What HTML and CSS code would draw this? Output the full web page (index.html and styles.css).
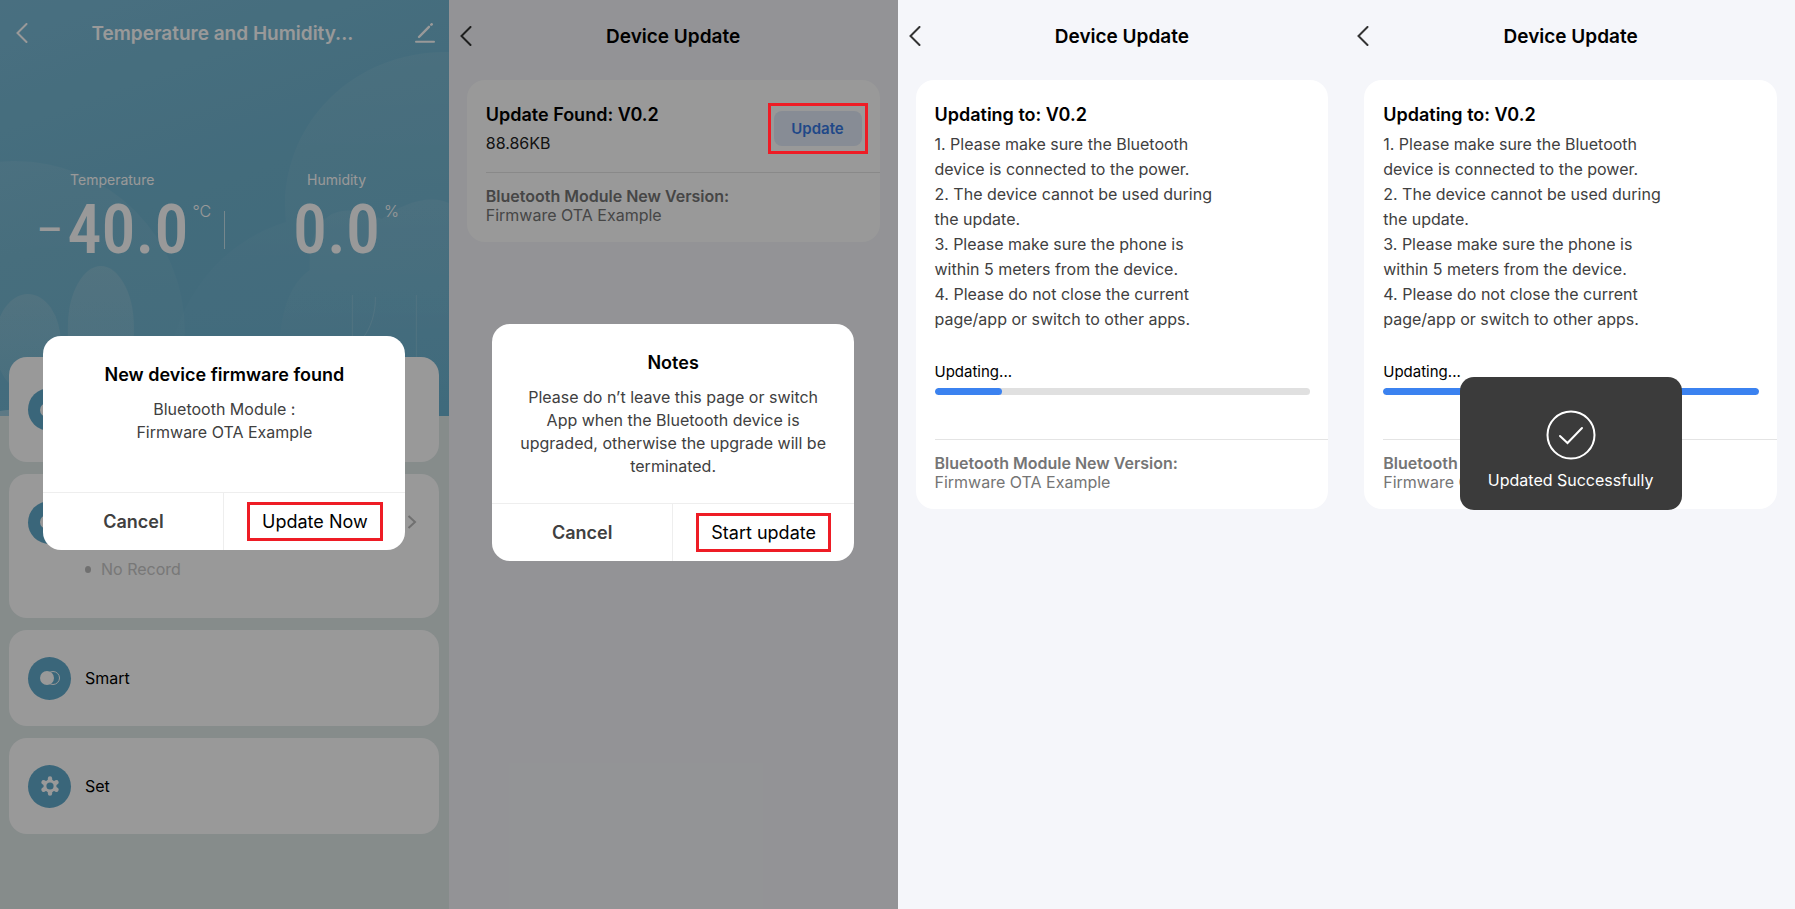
FILE: index.html
```html
<!DOCTYPE html>
<html lang="en">
<head>
  <meta charset="UTF-8">
  <meta name="viewport" content="width=device-width, initial-scale=1.0">
  <title>Device Update</title>
  <link rel="stylesheet" href="styles.css">
</head>
<body>
  <main class="screens">

    <!-- Device home -->
    <section class="screen screen-home">
      <div class="hero">
        <svg class="hero-art" viewBox="0 0 449 416" preserveAspectRatio="xMidYMid slice" aria-hidden="true">
          <defs>
            <linearGradient id="bush" x1="0" y1="0" x2="0" y2="1">
              <stop offset="0" stop-color="#f0f0e8" stop-opacity=".15"/>
              <stop offset="1" stop-color="#fff" stop-opacity=".06"/>
            </linearGradient>
            <linearGradient id="cloud" x1="0" y1="0" x2="0" y2="1">
              <stop offset="0" stop-color="#fff" stop-opacity=".07"/>
              <stop offset="1" stop-color="#fff" stop-opacity="0"/>
            </linearGradient>
          </defs>
          <circle cx="15" cy="331" r="170" fill="url(#cloud)"/>
          <path d="M286 222C276 130 350 50 449 52V416H165C160 320 210 245 286 222Z" fill="url(#cloud)"/>
          <path d="M310 270C308 240 318 222 332 214C350 206 368 213 382 219C402 203 430 194 449 203V416H278C276 330 282 290 310 270Z" fill="url(#cloud)"/>
          <path d="M68 416V326C68 292 84 266 101 266S134 292 134 326V416Z" fill="url(#bush)"/>
          <ellipse cx="28" cy="343" rx="33" ry="49" fill="url(#bush)"/>
          <path d="M0 411C10 409 25 409 40 410V416H0Z" fill="#fff" fill-opacity=".3"/>
          <g fill="none" stroke="#fff" stroke-opacity=".14">
            <path d="M352.500 295V416M416.500 295V416M375.500 297C376 312 371 328 363 338"/>
          </g>
        </svg>
      </div>
      <div class="home-content">
        <header class="topbar topbar-light">
          <button class="icon-btn" aria-label="Back">
            <svg width="12" height="20" viewBox="0 0 12 20"><path d="M10.500 1L1.500 10l9 9"/></svg>
          </button>
          <h1>Temperature and Humidity...</h1>
          <button class="icon-btn" aria-label="Edit">
            <svg width="20" height="20" viewBox="0 0 20 20"><path d="M1 18.800h18"/><path d="M4 14L14 3.800" stroke-width="2.400"/><path d="M16.300 1.700l.4-.4" stroke-width="2.600"/></svg>
          </button>
        </header>

        <div class="readings">
          <div class="reading">
            <span class="reading-label">Temperature</span>
            <span class="reading-value"><span class="minus">–</span>40.0<sup class="unit">°C</sup></span>
          </div>
          <div class="reading">
            <span class="reading-label">Humidity</span>
            <span class="reading-value">0.0<sup class="unit">%</sup></span>
          </div>
        </div>

        <div class="tiles">
          <div class="tile tile-first">
            <span class="tile-icon"><svg width="22" height="16" viewBox="0 0 22 16"><circle cx="14" cy="8" r="6.500" fill="none" stroke="#fff"/><circle cx="8" cy="8" r="7" fill="#fff"/></svg></span>
          </div>
          <div class="tile tile-record">
            <div class="tile-row">
              <span class="tile-icon"><svg width="22" height="16" viewBox="0 0 22 16"><circle cx="14" cy="8" r="6.500" fill="none" stroke="#fff"/><circle cx="8" cy="8" r="7" fill="#fff"/></svg></span>
              <svg class="tile-arrow" width="10" height="14" viewBox="0 0 10 14"><path d="M1.500 1l6.500 6-6.500 6"/></svg>
            </div>
            <p class="record">No Record</p>
          </div>
          <div class="tile">
            <span class="tile-icon"><svg width="22" height="16" viewBox="0 0 22 16"><circle cx="14" cy="8" r="6.500" fill="none" stroke="#fff"/><circle cx="8" cy="8" r="7" fill="#fff"/></svg></span>
            <span>Smart</span>
          </div>
          <div class="tile">
            <span class="tile-icon"><svg width="22" height="22" viewBox="0 0 22 22"><g stroke="#fff" stroke-width="4.400" stroke-linecap="round"><path d="M11 3.500v15M4.500 7.250l13 7.500M4.500 14.750l13-7.500"/></g><circle cx="11" cy="11" r="6.500" fill="#fff"/><circle cx="11" cy="11" r="3.600" fill="#61aacb"/></svg></span>
            <span>Set</span>
          </div>
        </div>
      </div>

      <div class="overlay overlay-dim">
        <div class="dialog" role="dialog" aria-labelledby="dialog-firmware">
          <div class="dialog-body">
            <h2 id="dialog-firmware">New device firmware found</h2>
            <p>Bluetooth Module :<br>Firmware OTA Example</p>
          </div>
          <div class="dialog-actions">
            <button class="cancel">Cancel</button>
            <button class="confirm"><span class="mark">Update Now</span></button>
          </div>
        </div>
      </div>
    </section>

    <!-- Update found -->
    <section class="screen">
      <header class="topbar">
        <button class="icon-btn" aria-label="Back">
          <svg width="12" height="20" viewBox="0 0 12 20"><path d="M10.500 1L1.500 10l9 9"/></svg>
        </button>
        <h1>Device Update</h1>
      </header>
      <div class="card">
        <div class="found">
          <div>
            <h2>Update Found: V0.2</h2>
            <p class="size">88.86KB</p>
          </div>
          <span class="mark-update"><button class="update-btn">Update</button></span>
        </div>
        <div class="version">
          <strong>Bluetooth Module New Version:</strong>
          <p>Firmware OTA Example</p>
        </div>
      </div>

      <div class="overlay overlay-dim">
        <div class="dialog" role="dialog" aria-labelledby="dialog-notes">
          <div class="dialog-body">
            <h2 id="dialog-notes">Notes</h2>
            <p>Please do n’t leave this page or switch App when the Bluetooth device is upgraded, otherwise the upgrade will be terminated.</p>
          </div>
          <div class="dialog-actions">
            <button class="cancel">Cancel</button>
            <button class="confirm"><span class="mark">Start update</span></button>
          </div>
        </div>
      </div>
    </section>

    <!-- Updating -->
    <section class="screen">
      <header class="topbar">
        <button class="icon-btn" aria-label="Back">
          <svg width="12" height="20" viewBox="0 0 12 20"><path d="M10.500 1L1.500 10l9 9"/></svg>
        </button>
        <h1>Device Update</h1>
      </header>
      <div class="card">
        <div class="updating">
          <h2>Updating to: V0.2</h2>
          <div class="steps">
            <p>1. Please make sure the Bluetooth device is connected to the power.</p>
            <p>2. The device cannot be used during the update.</p>
            <p>3. Please make sure the phone is within 5 meters from the device.</p>
            <p>4. Please do not close the current page/app or switch to other apps.</p>
          </div>
          <label for="progress-running">Updating...</label>
          <progress id="progress-running" value="18" max="100"></progress>
        </div>
        <div class="version">
          <strong>Bluetooth Module New Version:</strong>
          <p>Firmware OTA Example</p>
        </div>
      </div>
    </section>

    <!-- Update finished -->
    <section class="screen">
      <header class="topbar">
        <button class="icon-btn" aria-label="Back">
          <svg width="12" height="20" viewBox="0 0 12 20"><path d="M10.500 1L1.500 10l9 9"/></svg>
        </button>
        <h1>Device Update</h1>
      </header>
      <div class="card">
        <div class="updating">
          <h2>Updating to: V0.2</h2>
          <div class="steps">
            <p>1. Please make sure the Bluetooth device is connected to the power.</p>
            <p>2. The device cannot be used during the update.</p>
            <p>3. Please make sure the phone is within 5 meters from the device.</p>
            <p>4. Please do not close the current page/app or switch to other apps.</p>
          </div>
          <label for="progress-done">Updating...</label>
          <progress id="progress-done" value="100" max="100"></progress>
        </div>
        <div class="version">
          <strong>Bluetooth Module New Version:</strong>
          <p>Firmware OTA Example</p>
        </div>
      </div>

      <div class="overlay">
        <div class="toast" role="status">
          <svg width="50" height="50" viewBox="0 0 50 50"><circle cx="25" cy="25" r="23.500"/><path d="M14 26l7.500 7L36 18"/></svg>
          <p>Updated Successfully</p>
        </div>
      </div>
    </section>

  </main>
</body>
</html>
```
FILE: styles.css
```css
* {
  margin: 0;
  padding: 0;
  box-sizing: border-box;
}

body {
  font-family: Inter, "Liberation Sans", sans-serif;
  font-size: 16px;
  color: #000;
  background-color: #f5f6fa;
}

button {
  font: inherit;
  color: inherit;
  background: none;
  border: none;
  cursor: pointer;
}

.screens {
  display: grid;
  grid-template-columns: repeat(4, 1fr);
  min-height: 100vh;
}

.screen {
  position: relative;
  overflow: hidden;
  background-color: #f5f6fa;
}

/* Top bar */
.topbar {
  display: grid;
  grid-template-columns: 36px 1fr 36px;
  align-items: center;
  height: 72px;
}

.topbar h1 {
  font-size: 19px;
  font-weight: 600;
  text-align: center;
}

.icon-btn {
  display: flex;
  padding-left: 11px;
}

.icon-btn svg {
  fill: none;
  stroke: #333;
  stroke-width: 2;
  stroke-linecap: round;
}

.topbar-light {
  height: 66px;
  padding-right: 4px;
  color: #fff;
}

.topbar-light .icon-btn {
  padding-left: 16px;
}

.topbar-light .icon-btn:last-child {
  padding-left: 6px;
}

.topbar-light .icon-btn svg {
  stroke: #fff;
}

/* Home screen */
.screen-home {
  background-color: #dfe9e8;
}

.hero {
  position: absolute;
  top: 0;
  left: 0;
  right: 0;
  height: 416px;
  background: linear-gradient(160deg, #7abad6 0%, #70b4cf 45%, #69b1cf 100%);
}

.hero-art {
  display: block;
  width: 100%;
  height: 100%;
}

.home-content {
  position: relative;
}

.readings {
  display: flex;
  align-items: center;
  height: 291px;
  color: #fff;
}

.reading {
  position: relative;
  flex: 1;
  display: flex;
  flex-direction: column;
  align-items: center;
  height: 82px;
}

.reading + .reading::before {
  content: "";
  position: absolute;
  left: 0;
  top: 40px;
  width: 1px;
  height: 38px;
  background-color: rgba(255, 255, 255, 0.6);
}

.reading-label {
  font-size: 14px;
  line-height: 18px;
}

.reading-value {
  position: relative;
  display: flex;
  align-items: center;
  gap: 4px;
  font-family: "Roboto Condensed", "Open Sans Condensed", "Liberation Sans", sans-serif;
  font-size: 68px;
  font-weight: 500;
  line-height: 82px;
}

.minus {
  font-size: 48px;
  font-weight: 400;
}

.unit {
  position: absolute;
  left: 100%;
  top: 13px;
  padding-left: 4px;
  font-family: Inter, sans-serif;
  font-size: 16px;
  font-weight: 300;
  line-height: 18px;
}

.tiles {
  display: grid;
  gap: 12px;
  padding: 0 10px 0 9px;
}

.tile {
  display: flex;
  align-items: center;
  gap: 14px;
  min-height: 96px;
  padding: 0 22px 0 19px;
  border-radius: 18px;
  background-color: #fff;
}

.tile-first {
  min-height: 105px;
}

.tile-record {
  display: block;
  min-height: 144px;
}

.tile-row {
  display: flex;
  align-items: center;
  justify-content: space-between;
  height: 96px;
}

.tile-arrow {
  fill: none;
  stroke: #bbb;
  stroke-width: 2;
}

.tile-icon {
  display: flex;
  align-items: center;
  justify-content: center;
  width: 43px;
  height: 43px;
  border-radius: 50%;
  background-color: #61aacb;
}

.record {
  display: flex;
  align-items: center;
  gap: 10px;
  padding-left: 57px;
  font-size: 16px;
  line-height: 20px;
  margin-top: -11px;
  color: #c8c8c8;
}

.record::before {
  content: "";
  width: 6px;
  height: 7px;
  border-radius: 50%;
  background-color: #bbb;
}

/* Overlay, dialog and toast */
.overlay {
  position: absolute;
  inset: 0;
  display: flex;
  align-items: center;
  justify-content: center;
  padding-bottom: 22px;
}

.overlay-dim {
  padding-bottom: 24px;
  background-color: rgba(0, 0, 0, 0.4);
}

.dialog {
  width: 362px;
  max-width: 90%;
  border-radius: 18px;
  overflow: hidden;
  text-align: center;
  background-color: #fff;
}

.dialog-body {
  padding: 27px 26px 25px;
}

.dialog-body h2 {
  margin-bottom: 11px;
  font-size: 18px;
  font-weight: 600;
  line-height: 24px;
}

.dialog-body p {
  min-height: 69px;
  font-size: 16px;
  line-height: 23px;
  color: #404040;
}

.dialog-actions {
  display: grid;
  grid-template-columns: 1fr 1fr;
  height: 58px;
  border-top: 1px solid #eee;
  font-size: 18px;
}

.cancel {
  font-weight: 600;
  color: #404040;
  border-right: 1px solid #eee;
}

.mark {
  display: inline-block;
  padding: 6px 12px;
  border: 3px solid #ee1c25;
}

.toast {
  display: flex;
  flex-direction: column;
  align-items: center;
  gap: 10px;
  width: 222px;
  padding: 33px 10px 20px;
  border-radius: 14px;
  color: #fff;
  background-color: #3b3b3b;
}

.toast svg {
  fill: none;
  stroke: #fff;
  stroke-width: 2;
  stroke-linecap: round;
}

.toast p {
  font-size: 16px;
  line-height: 20px;
}

/* Update card */
.card {
  margin: 8px 18px 0;
  padding-left: 19px;
  border-radius: 18px;
  background-color: #fff;
}

.card h2 {
  font-size: 18px;
  font-weight: 600;
  line-height: 24px;
}

.found {
  display: flex;
  justify-content: space-between;
  height: 92px;
  padding: 23px 12px 0 0;
}

.size {
  margin-top: 6px;
  font-size: 16px;
  line-height: 20px;
  color: #222;
}

.mark-update {
  position: relative;
  align-self: flex-start;
  display: flex;
  padding: 8px 6px;
}

/* the red frame stays above the dimmed screen */
.mark-update::after {
  content: "";
  position: absolute;
  inset: 0;
  z-index: 1;
  border: 3px solid #ee1c25;
  pointer-events: none;
}

.update-btn {
  width: 88px;
  height: 35px;
  border-radius: 8px;
  font-size: 15px;
  font-weight: 600;
  color: #3678e3;
  background-color: #e1eaf8;
}

.updating {
  padding: 23px 18px 44px 0;
}

.steps {
  max-width: 288px;
  margin: 5px 0 30px;
  font-size: 16px;
  line-height: 25px;
  color: #404040;
}

.updating label {
  display: block;
  font-size: 15px;
  line-height: 20px;
}

progress {
  display: block;
  width: 100%;
  height: 7px;
  margin-top: 6px;
  appearance: none;
  border: none;
  border-radius: 4px;
  overflow: hidden;
  background-color: #e0e0e0;
}

progress::-webkit-progress-bar {
  background-color: #e0e0e0;
}

progress::-webkit-progress-value {
  border-radius: 4px;
  background-color: #3b82f0;
}

.version {
  padding: 14px 0 17px;
  border-top: 1px solid #e4e4e4;
  font-size: 16px;
  line-height: 19px;
  color: #757575;
}

.version strong {
  font-weight: 600;
}
```
